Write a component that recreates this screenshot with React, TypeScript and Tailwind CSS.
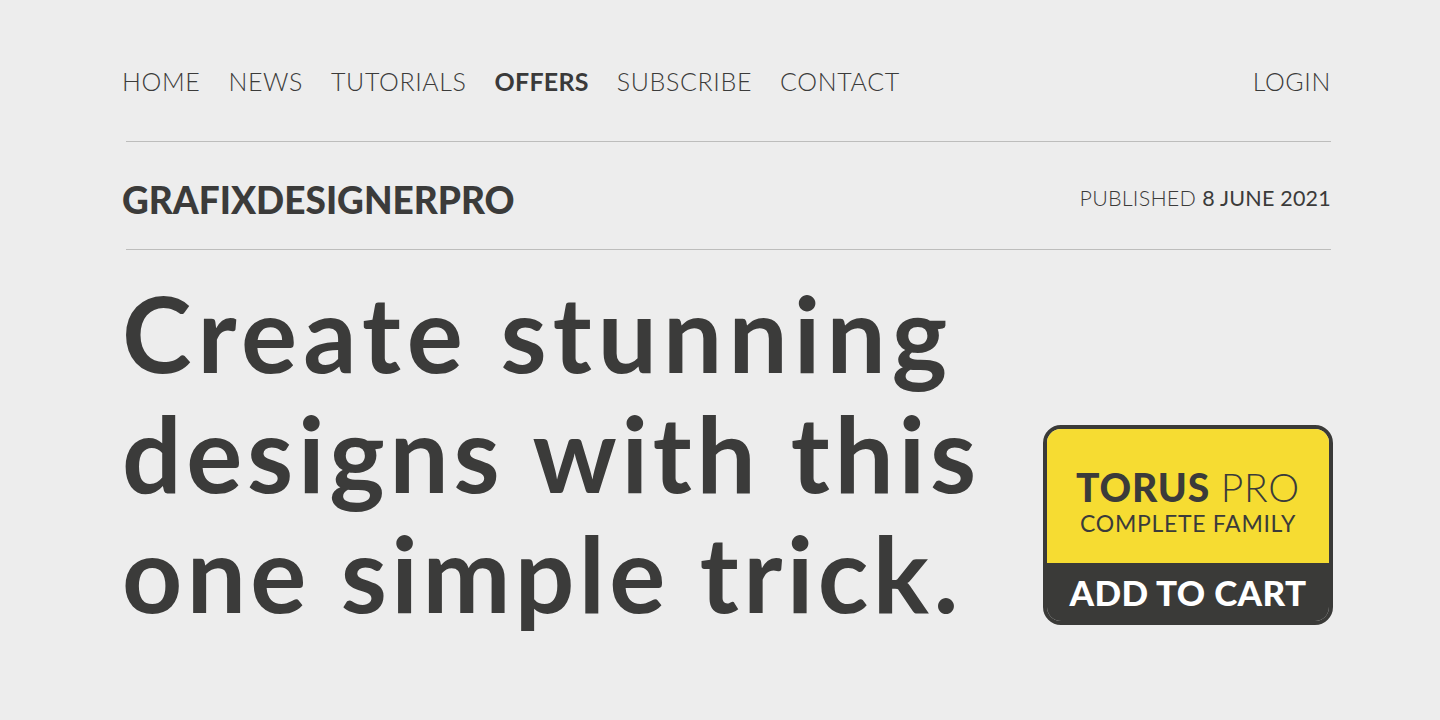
const navItems = [
  { label: 'HOME', bold: false },
  { label: 'NEWS', bold: false },
  { label: 'TUTORIALS', bold: false },
  { label: 'OFFERS', bold: true },
  { label: 'SUBSCRIBE', bold: false },
  { label: 'CONTACT', bold: false },
]

export default function App() {
  return (
    <div
      className="w-full h-[720px] bg-[#ededed] text-[#3b3b3a] pl-[122px] pr-[109px] overflow-hidden"
      style={{ fontFamily: 'Lato, "Noto Sans", sans-serif' }}
    >
      {/* Nav */}
      <nav className="flex items-center justify-between pt-[63px] h-[141px] pb-[42px]">
        <ul className="flex items-center gap-[28px]">
          {navItems.map((item) => (
            <li
              key={item.label}
              className={`text-[25px] leading-none ${
                item.bold ? 'font-bold tracking-[0.01em] text-[#3a3a3a]' : 'font-light tracking-[0.025em]'
              }`}
            >
              {item.label}
            </li>
          ))}
        </ul>
        <span className="text-[25px] leading-none tracking-[0.025em] font-light">LOGIN</span>
      </nav>

      <div className="ml-1 h-px bg-[#bdbdbc]" />

      {/* Brand row */}
      <div className="flex items-center justify-between h-[107px] pt-[7px]">
        <span className="text-[37px] leading-none font-black">GRAFIXDESIGNERPRO</span>
        <span className="text-[21.5px] leading-none tracking-[0.01em] font-light">
          PUBLISHED <span className="font-normal">8 JUNE 2021</span>
        </span>
      </div>

      <div className="ml-1 h-px bg-[#bdbdbc]" />

      {/* Headline + badge */}
      <div className="flex items-end justify-between mt-[22px]">
        <h1 className="text-[105px] leading-[120px] font-bold w-[900px] whitespace-nowrap">
          <span className="tracking-[0.058em]">Create stunning</span>
          <br />
          <span className="tracking-[0.045em]">designs with this</span>
          <br />
          <span className="tracking-[0.042em]">one simple trick.</span>
        </h1>

        <button className="mb-[7px] -mr-[2px] w-[290px] h-[200px] rounded-[18px] border-[4px] border-[#3a3a38] overflow-hidden flex flex-col">
          <div className="flex-1 bg-[#f6dc32] flex flex-col items-center justify-center pt-[11px]">
            <div className="text-[39px] leading-none tracking-[0.02em]">
              <span className="font-black">TORUS</span> <span className="font-light">PRO</span>
            </div>
            <div className="mt-[5px] text-[23px] leading-none tracking-[0.03em] font-normal">
              COMPLETE FAMILY
            </div>
          </div>
          <div className="h-[58px] bg-[#3a3a38] flex items-center justify-center">
            <span className="text-white text-[35px] leading-none font-black tracking-[0.01em]">
              ADD TO CART
            </span>
          </div>
        </button>
      </div>
    </div>
  )
}
